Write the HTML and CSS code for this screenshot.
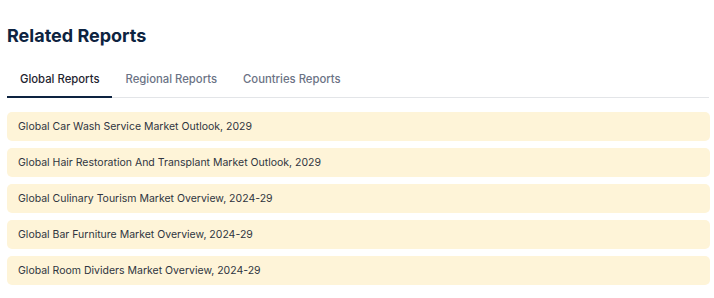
FILE: index.html
```html
<!DOCTYPE html>
<html lang="en">
<head>
    <meta charset="UTF-8">
    <meta name="viewport" content="width=device-width, initial-scale=1.0">
    <title>Related Reports</title>
    <link rel="stylesheet" href="styles.css">
</head>
<body>
    <div class="related">
        <h2>Related Reports</h2>

        <div class="tabs">
            <button class="tab active">Global Reports</button>
            <button class="tab">Regional Reports</button>
            <button class="tab">Countries Reports</button>
        </div>

        <ul class="report-list">
            <li><a href="#">Global Car Wash Service Market Outlook, 2029</a></li>
            <li><a href="#">Global Hair Restoration And Transplant Market Outlook, 2029</a></li>
            <li><a href="#">Global Culinary Tourism Market Overview, 2024-29</a></li>
            <li><a href="#">Global Bar Furniture Market Overview, 2024-29</a></li>
            <li><a href="#">Global Room Dividers Market Overview, 2024-29</a></li>
        </ul>
    </div>
</body>
</html>
```

FILE: styles.css
```css
* {
    margin: 0;
    padding: 0;
    box-sizing: border-box;
}

body {
    font-family: Inter, 'Noto Sans', sans-serif;
    background: #fff;
    color: #333;
}

.related {
    padding: 24px 4px 0 7px;
}

h2 {
    font-size: 18px;
    font-weight: 700;
    line-height: 24px;
    color: #0d2340;
}

.tabs {
    display: flex;
    margin-top: 14px;
    border-bottom: 1px solid #e3e5e8;
    margin-right: 1px;
}

.tab {
    font-family: inherit;
    font-size: 11.3px;
    font-weight: 500;
    line-height: 16px;
    color: #6b7385;
    background: none;
    border: none;
    padding: 9px 13px 9px;
    border-bottom: 2px solid transparent;
    margin-bottom: -1px;
    cursor: pointer;
}

.tab.active {
    color: #1f2530;
    border-bottom-color: #0d2340;
}

.report-list {
    list-style: none;
    display: flex;
    flex-direction: column;
    gap: 7px;
    margin-top: 14px;
}

.report-list li {
    background: #fef4d8;
    border-radius: 5px;
}

.report-list a {
    display: block;
    padding: 7px 11px;
    font-size: 10.5px;
    line-height: 15px;
    color: #2f3540;
    text-decoration: none;
}
```
